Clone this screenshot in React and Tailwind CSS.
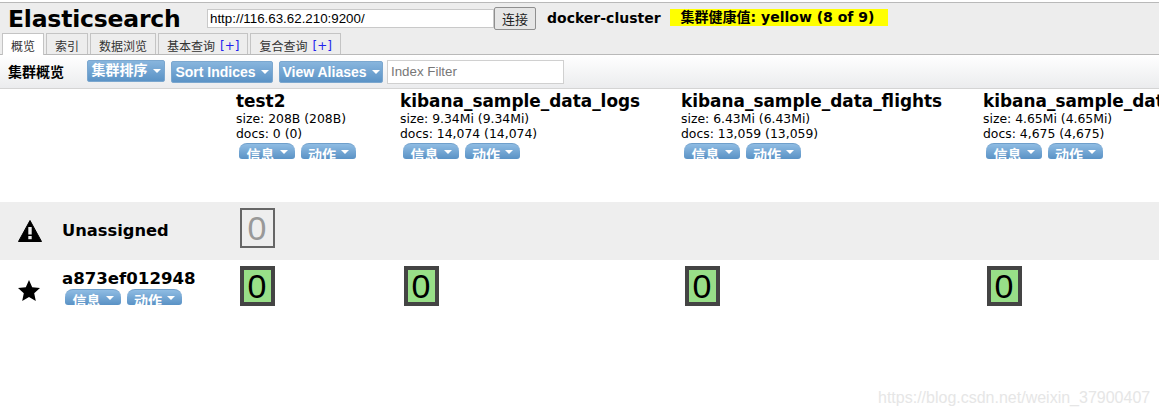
const indices = [
  { name: "test2", size: "size: 208B (208B)", docs: "docs: 0 (0)", width: "w-[164px]" },
  { name: "kibana_sample_data_logs", size: "size: 9.34Mi (9.34Mi)", docs: "docs: 14,074 (14,074)", width: "w-[281px]" },
  { name: "kibana_sample_data_flights", size: "size: 6.43Mi (6.43Mi)", docs: "docs: 13,059 (13,059)", width: "w-[302px]" },
  { name: "kibana_sample_data_ecommerce", size: "size: 4.65Mi (4.65Mi)", docs: "docs: 4,675 (4,675)", width: "w-[300px]" },
];

const tabs = [
  { label: "概览", active: true },
  { label: "索引" },
  { label: "数据浏览" },
  { label: "基本查询", plus: true },
  { label: "复合查询", plus: true },
];

const Caret = () => (
  <span className="inline-block w-0 h-0 border-x-[4px] border-x-transparent border-t-[4px] border-t-white" />
);

// toolbar dropdown button
const MenuButton = ({ label, className }) => (
  <div className={`flex items-center justify-center gap-[5px] rounded-[2px] border border-[#7ba7cf] bg-gradient-to-b from-[#88b5dd] to-[#5b93c6] text-white font-bold text-[14px] font-['Liberation_Sans','Noto_Sans_CJK_SC',sans-serif] ${className}`}>
    <span className="whitespace-nowrap">{label}</span>
    <Caret />
  </div>
);

// the small pills are cut off at the bottom in the original
const Pill = ({ label, className }) => (
  <div className={`flex items-start justify-center gap-[5px] h-[16px] overflow-hidden rounded-t-[8px] rounded-b-[3px] border-t border-[#6f9fcb] bg-gradient-to-b from-[#8fbce3] to-[#5a92c5] text-white font-bold text-[14px] leading-[20px] font-['Noto_Sans_CJK_SC',sans-serif] ${className}`}>
    <span className="whitespace-nowrap">{label}</span>
    <span className="mt-[6px] flex"><Caret /></span>
  </div>
);

const Pills = ({ className }) => (
  <div className={`flex gap-[6px] ${className}`}>
    <Pill label="信息" className="w-[56px]" />
    <Pill label="动作" className="w-[55px]" />
  </div>
);

const Shard = ({ unassigned }) => (
  <div className={`flex items-center justify-center w-[35px] h-[40px] pr-[1px] font-['Liberation_Sans',sans-serif] text-[34px] leading-none ${unassigned ? "border-[2px] border-[#666] text-[#999]" : "border-[4px] border-[#444] bg-[#98df88] text-black"}`}>
    0
  </div>
);

export default function App() {
  return (
    <div className="relative w-[1159px] h-[416px] overflow-hidden bg-white text-black font-['DejaVu_Sans',sans-serif]">
      {/* Header */}
      <div className="mt-[2px] h-[53px] border-y border-[#b9b9b9] bg-[#ededed] flex flex-col">
        <div className="flex items-start h-[30px] pl-[8px]">
          <div className="w-[199px] font-bold text-[23.5px] leading-[30px] mt-[1px] tracking-[-0.2px]">Elasticsearch</div>
          <input
            readOnly
            value="http://116.63.62.210:9200/"
            className="mt-[6px] w-[287px] h-[19px] bg-white border border-[#c9c9c9] pl-[2px] text-[13.33px] outline-none font-['Liberation_Sans',sans-serif]"
          />
          <div className="mt-[4px] w-[42px] h-[23px] flex items-center justify-center border border-[#8f8f8f] rounded-[2px] bg-[#e6e6e6] text-[13px] text-[#222] font-['Noto_Sans_CJK_SC',sans-serif]">连接</div>
          <div className="ml-[11px] mt-[6px] font-bold text-[14px] leading-[18px] whitespace-nowrap">docker-cluster</div>
          <div className="ml-[9px] mt-[6px] w-[218px] h-[17px] pl-[11px] bg-[#ffff00] font-bold text-[14px] leading-[17px] whitespace-nowrap font-['DejaVu_Sans','Noto_Sans_CJK_SC',sans-serif]">集群健康值: yellow (8 of 9)</div>
        </div>
        <div className="flex items-end gap-[2px] pl-[2px] h-[21px] font-['Noto_Sans_CJK_SC',sans-serif] text-[12px] text-[#333]">
          {tabs.map((tab) => (
            <div
              key={tab.label}
              className={`flex justify-center gap-[5px] px-[8px] pt-[3px] border-x border-t border-[#c4c4c4] whitespace-nowrap ${tab.active ? "h-[22px] -mb-[1px] bg-white" : "h-[21px] bg-[#ededed]"}`}
            >
              <span>{tab.label}</span>
              {tab.plus && <span className="text-[#2222ee] font-['DejaVu_Sans',sans-serif]">[+]</span>}
            </div>
          ))}
        </div>
      </div>

      {/* Toolbar */}
      <div className="h-[34px] flex items-center pl-[8px] border-b border-[#d4d4d4] bg-gradient-to-b from-white to-[#ebecee]">
        <div className="w-[79px] font-bold text-[14px] font-['Noto_Sans_CJK_SC',sans-serif]">集群概览</div>
        <MenuButton label="集群排序" className="w-[78px] h-[22px] mr-[6px] -mt-[2px]" />
        <MenuButton label="Sort Indices" className="w-[102px] h-[22px] mr-[6px] mt-[1px]" />
        <MenuButton label="View Aliases" className="w-[104px] h-[22px] mr-[4px] mt-[1px]" />
        <input
          readOnly
          placeholder="Index Filter"
          className="w-[177px] h-[24px] bg-white border border-[#d0d0d0] pl-[3px] text-[13.33px] outline-none placeholder:text-[#777] font-['Liberation_Sans',sans-serif]"
        />
      </div>

      {/* Index headers */}
      <div className="flex h-[113px] pl-[236px]">
        {indices.map((idx) => (
          <div key={idx.name} className={`shrink-0 pt-[2px] ${idx.width}`}>
            <div className="font-bold text-[16.9px] leading-[20px] whitespace-nowrap">{idx.name}</div>
            <div className="text-[12.4px] leading-[15px] whitespace-nowrap">{idx.size}</div>
            <div className="text-[12.4px] leading-[15px] whitespace-nowrap">{idx.docs}</div>
            <Pills className="mt-[2px] ml-[3px]" />
          </div>
        ))}
      </div>

      {/* Unassigned row */}
      <div className="flex h-[58px] bg-[#eeeeee]">
        <div className="w-[62px] flex items-center pl-[18px]">
          <svg width="24" height="22" viewBox="0 0 24 22">
            <path d="M12 0.5 L23.5 21.5 H0.5 Z" fill="#000" stroke="#000" strokeLinejoin="round" />
            <rect x="10.3" y="7" width="3.4" height="7.5" fill="#eee" />
            <rect x="10.3" y="16" width="3.4" height="3.2" fill="#eee" />
          </svg>
        </div>
        <div className="w-[178px] flex items-center pt-[1px] font-bold text-[16.3px]">Unassigned</div>
        <div className="pt-[6px]"><Shard unassigned /></div>
      </div>

      {/* Node row */}
      <div className="flex">
        <div className="w-[62px] pl-[18px] pt-[20px]">
          <svg width="22" height="21" viewBox="0 0 22 21">
            <path d="M11 0 L14.2 7.2 L22 8 L16.2 13.2 L17.8 21 L11 17 L4.2 21 L5.8 13.2 L0 8 L7.8 7.2 Z" fill="#000" />
          </svg>
        </div>
        <div className="w-[178px] pt-[9px]">
          <div className="font-bold text-[16.6px] leading-[20px] whitespace-nowrap">a873ef012948</div>
          <Pills className="ml-[3px]" />
        </div>
        <div className="flex pt-[6px]">
          <div className="w-[164px]"><Shard /></div>
          <div className="w-[281px]"><Shard /></div>
          <div className="w-[302px]"><Shard /></div>
          <div><Shard /></div>
        </div>
      </div>

      {/* Watermark */}
      <div className="absolute left-[878px] top-[388px] text-[16px] leading-[20px] text-[#e6e6e6] whitespace-nowrap font-['Liberation_Sans',sans-serif]">
        https://blog.csdn.net/weixin_37900407
      </div>
    </div>
  );
}
